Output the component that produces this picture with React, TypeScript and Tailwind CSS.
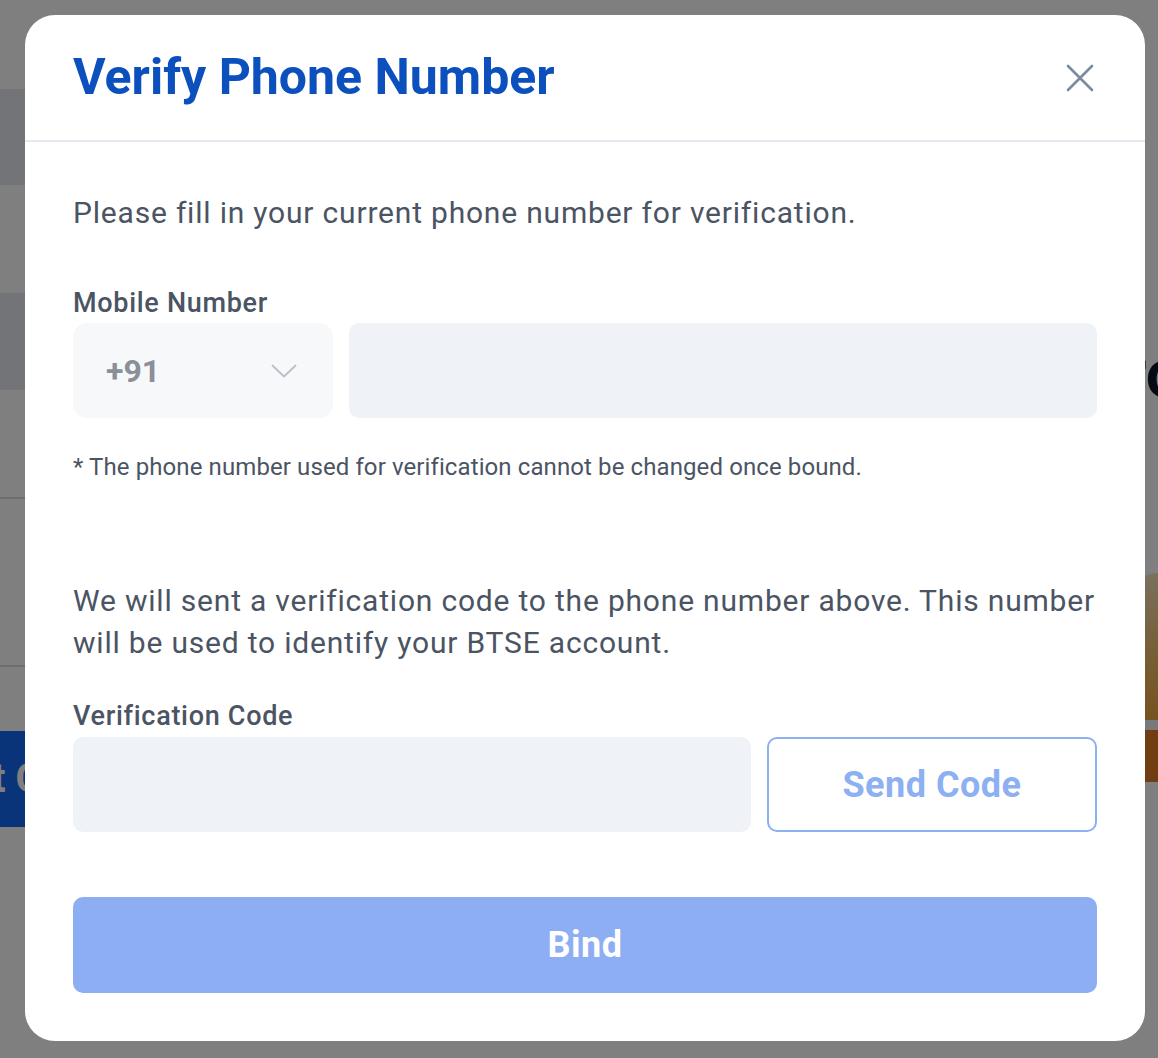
import { useState } from 'react'

function CloseIcon() {
  return (
    <svg width="28" height="28" viewBox="0 0 28 28" fill="none">
      <path d="M2 2L26 26M26 2L2 26" stroke="#7b8b9b" strokeWidth="2.6" strokeLinecap="round" />
    </svg>
  )
}

function Chevron() {
  return (
    <svg width="26" height="14" viewBox="0 0 26 14" fill="none">
      <path d="M1.5 1.5L13 12.5L24.5 1.5" stroke="#b8c0ca" strokeWidth="1.8" strokeLinecap="round" strokeLinejoin="round" />
    </svg>
  )
}

export default function App() {
  const [phone, setPhone] = useState('')
  const [code, setCode] = useState('')

  return (
    <div className="relative h-[1058px] w-[1158px] overflow-hidden bg-white font-['Roboto','Liberation_Sans',sans-serif]">

      {/* ── page behind the modal ── */}
      <div className="flex h-full">
        <div className="flex w-[1128px] flex-col">
          <div className="h-[89px]" />
          <div className="h-[96px] bg-[#e6e9ee]" />
          <div className="h-[108px]" />
          <div className="h-[97px] bg-[#e6e9ee]" />
          <div className="h-[109px] border-b-2 border-[#dcdcdc]" />
          <div className="h-[168px] border-b-2 border-[#dcdcdc]" />
          <div className="h-[64px]" />
          <div className="flex h-[96px] w-[300px] items-center overflow-hidden whitespace-nowrap bg-[#1468f4] text-[40px] font-bold text-white">
            <span className="-ml-[8px]">t Continue</span>
          </div>
        </div>
        <div className="flex w-[30px] flex-col overflow-hidden">
          <div className="h-[338px]" />
          <div className="-ml-[6px] whitespace-nowrap text-[68px] font-semibold leading-[72px] text-[#0d1526]">ro</div>
          <div className="h-[163px]" />
          <div className="h-[147px] w-full rounded-tl-[40px] bg-gradient-to-b from-[#f4e2bc] via-[#f0c070] to-[#eca640]" />
          <div className="h-[10px] w-full bg-[#f2f2f2]" />
          <div className="h-[52px] w-full bg-[#e07c24]" />
        </div>
      </div>

      {/* ── overlay + modal ── */}
      <div className="absolute inset-0 bg-black/50 pl-[25px] pt-[15px]">
        <div className="flex h-[1026px] w-[1120px] flex-col rounded-[30px] bg-white">

          <div className="flex h-[127px] shrink-0 items-center justify-between border-b-2 border-[#e4e9f0] pl-[48px] pr-[50px]">
            <h1 className="text-[50px] font-bold text-[#0b50bc]">Verify Phone Number</h1>
            <button className="flex h-[30px] w-[30px] items-center justify-center">
              <CloseIcon />
            </button>
          </div>

          <div className="flex flex-col px-[48px] pt-[50px] text-[#4b5463]">
            <p className="text-[30px] leading-[42px] tracking-[0.8px]">Please fill in your current phone number for verification.</p>

            <label className="mt-[51px] text-[27px] font-medium leading-[36px] tracking-[0.7px]">Mobile Number</label>
            <div className="mt-[2px] flex gap-[16px]">
              <div className="flex h-[95px] w-[260px] items-center justify-between rounded-[14px] bg-[#f7f8fa] pl-[33px] pr-[36px]">
                <span className="text-[32px] font-bold text-[#8a9099]">+91</span>
                <Chevron />
              </div>
              <input
                value={phone}
                onChange={e => setPhone(e.target.value)}
                className="h-[95px] flex-1 rounded-[10px] bg-[#eff2f7] px-[24px] text-[30px] outline-none"
              />
            </div>

            <p className="mt-[32px] text-[24px] leading-[34px] tracking-[0.1px]">* The phone number used for verification cannot be changed once bound.</p>

            <p className="mt-[96px] text-[30px] leading-[42px] tracking-[0.8px]">
              <span className="block whitespace-nowrap">We will sent a verification code to the phone number above. This number</span>
              <span className="block whitespace-nowrap">will be used to identify your BTSE account.</span>
            </p>

            <label className="mt-[34px] text-[27px] font-medium leading-[36px] tracking-[0.7px]">Verification Code</label>
            <div className="mt-[3px] flex gap-[16px]">
              <input
                value={code}
                onChange={e => setCode(e.target.value)}
                className="h-[95px] flex-1 rounded-[10px] bg-[#eff2f7] px-[24px] text-[30px] outline-none"
              />
              <button className="h-[95px] w-[330px] rounded-[10px] border-2 border-[#8cb0f2] text-[36px] font-bold tracking-[0.5px] text-[#8cb0f2]">
                Send Code
              </button>
            </div>

            <button className="mt-[65px] h-[96px] w-full rounded-[10px] bg-[#8daef2] text-[36px] font-bold tracking-[0.5px] text-white">
              Bind
            </button>
          </div>
        </div>
      </div>
    </div>
  )
}
